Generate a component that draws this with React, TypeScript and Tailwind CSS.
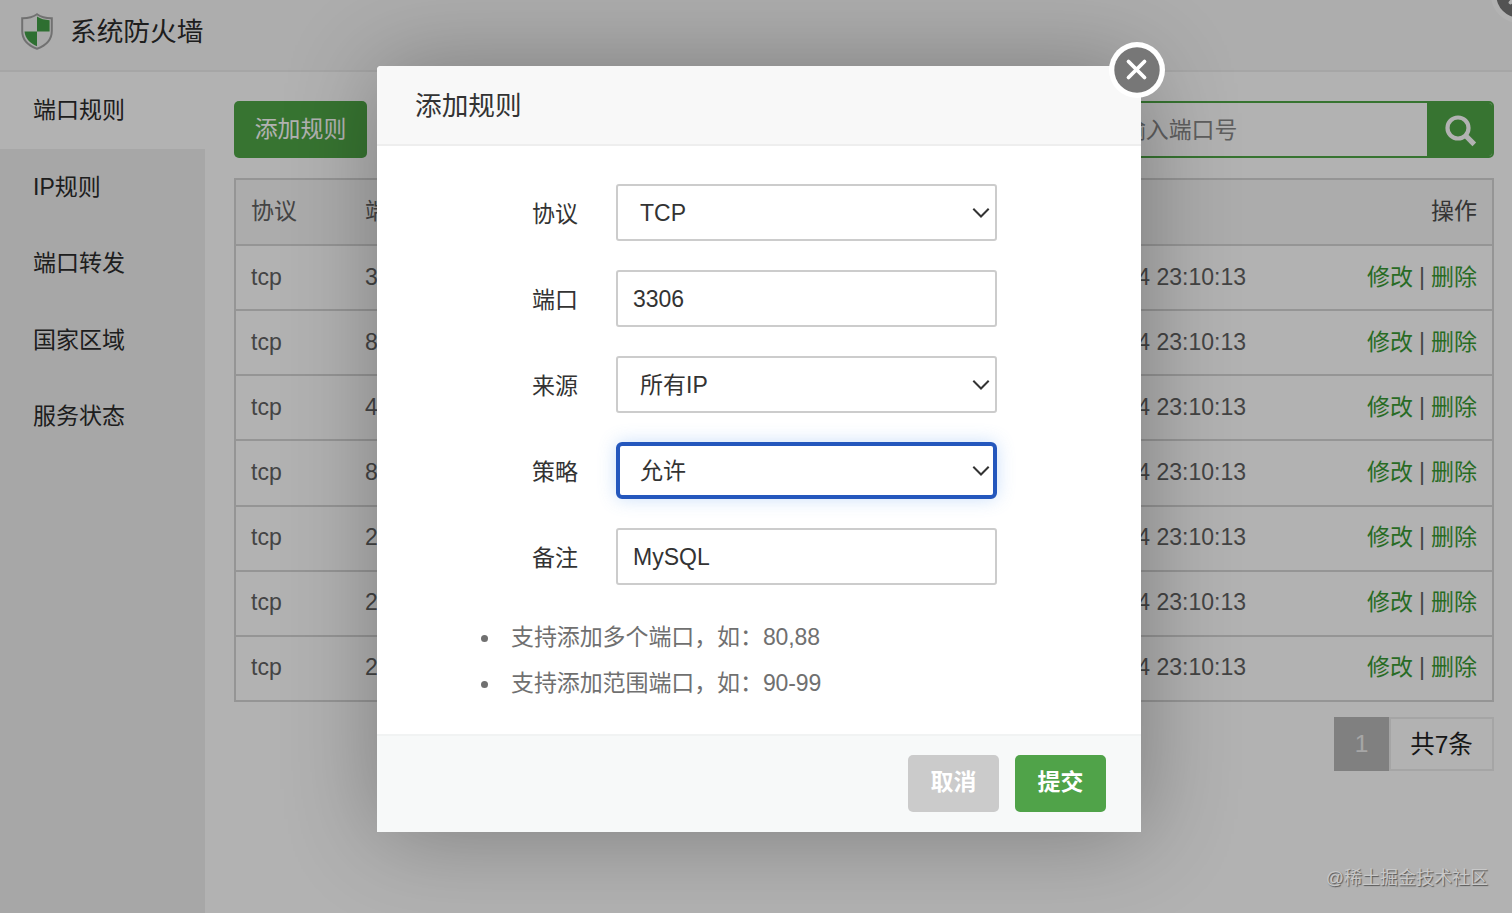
import { clsx } from 'clsx';

const menuItems = ['端口规则', 'IP规则', '端口转发', '国家区域', '服务状态'];

const rules = [
  { protocol: 'tcp', port: '3', time: '4 23:10:13' },
  { protocol: 'tcp', port: '8', time: '4 23:10:13' },
  { protocol: 'tcp', port: '4', time: '4 23:10:13' },
  { protocol: 'tcp', port: '8', time: '4 23:10:13' },
  { protocol: 'tcp', port: '2', time: '4 23:10:13' },
  { protocol: 'tcp', port: '2', time: '4 23:10:13' },
  { protocol: 'tcp', port: '2', time: '4 23:10:13' },
];

const fields = [
  { label: '协议', value: 'TCP', select: true, focused: false },
  { label: '端口', value: '3306', select: false, focused: false },
  { label: '来源', value: '所有IP', select: true, focused: false },
  { label: '策略', value: '允许', select: true, focused: true },
  { label: '备注', value: 'MySQL', select: false, focused: false },
];

const tips = ['支持添加多个端口，如：80,88', '支持添加范围端口，如：90-99'];

function ShieldIcon() {
  return (
    <svg className="w-8 h-[37px]" viewBox="0 0 32 37" fill="none">
      <path d="M16 1.2C12 4 7 5.3 1.2 5.2V18c0 8.4 5.6 14.4 14.8 17.8C25.2 32.4 30.8 26.4 30.8 18V5.2C25 5.3 20 4 16 1.2Z" fill="#f4f4f4" stroke="#a3a3a3" strokeWidth="2" />
      <path d="M16 3.6c3.6 2.3 7.8 3.5 12.6 3.7V18.5H16Z" fill="#43a047" />
      <path d="M16 18.5V33.2C8.5 30.2 4.2 25.2 3.5 18.5Z" fill="#43a047" />
    </svg>
  );
}

function CloseIcon() {
  return (
    <svg className="w-14 h-14" viewBox="0 0 56 56" fill="none">
      <circle cx="28" cy="28" r="28" fill="#fff" />
      <circle cx="28" cy="28" r="22.7" fill="#777" />
      <path d="M19.5 19.5l16 16M35.5 19.5l-16 16" stroke="#fff" strokeWidth="3.8" strokeLinecap="round" />
    </svg>
  );
}

function SearchIcon() {
  return (
    <svg className="w-8 h-8 mt-[3px] ml-[2px]" viewBox="0 0 32 32" fill="none" stroke="#fff">
      <circle cx="13" cy="13" r="10.5" strokeWidth="4.2" />
      <path d="M20.5 20.5l8.8 8.8" strokeWidth="5.2" />
    </svg>
  );
}

function RuleTable() {
  return (
    <div className="mt-5 h-[524px] border-2 border-[#d6d6d6] flex flex-col text-[23px] text-[#626262]">
      <div className="h-[64px] shrink-0 flex items-center px-[15px] pb-[2px] bg-[#f6f6f6]">
        <span className="w-[114px] leading-8">协议</span>
        <span className="flex-1 leading-8">端口</span>
        <span className="leading-8 text-[#4c4c4c]">操作</span>
      </div>
      {rules.map((rule, index) => (
        <div key={index} className="flex-1 flex items-center px-[15px] pb-[2px] border-t-2 border-[#d6d6d6]">
          <span className="w-[114px] leading-8">{rule.protocol}</span>
          <span className="flex-1 leading-8">{rule.port}</span>
          <span className="w-[109px] mr-[121px] leading-8 text-right whitespace-nowrap">{rule.time}</span>
          <span className="w-[110px] flex justify-between leading-8 whitespace-nowrap">
            <a className="text-[#3a9a34]">修改</a>
            <span>|</span>
            <a className="text-[#3a9a34]">删除</a>
          </span>
        </div>
      ))}
    </div>
  );
}

function FirewallPage() {
  return (
    <div className="w-full h-full flex flex-col bg-white">
      <header className="h-[72px] shrink-0 flex items-center gap-[17px] pl-[21px] pb-2 bg-[#f8f8f8] border-b-2 border-[#eee]">
        <ShieldIcon />
        <h1 className="pt-[2px] text-[26.7px] leading-9 text-[#2b2b2b]">系统防火墙</h1>
      </header>

      <div className="flex-1 min-h-0 flex">
        <nav className="w-[205px] shrink-0 bg-[#f0f0f0] text-[23px] text-[#2b2b2b]">
          {menuItems.map((item, index) => (
            <div
              key={item}
              className={clsx('h-[76.5px] pl-[33px] pt-[22px] leading-8', index === 0 && 'bg-white')}
            >
              {item}
            </div>
          ))}
        </nav>

        <main className="flex-1 pl-[29px] pr-[18px] pt-[29px]">
          <div className="h-[57px] flex justify-between">
            <button className="w-[133px] h-full rounded-[5px] bg-[#50a747] text-[22.9px] text-white">添加规则</button>
            <div className="w-[430px] flex rounded-[5px] overflow-hidden border-2 border-[#50a747]">
              <div className="flex-1 pl-[34px] pt-[11px] leading-8 text-[22.9px] text-[#888]">请输入端口号</div>
              <div className="w-[65px] flex items-center justify-center bg-[#50a747]">
                <SearchIcon />
              </div>
            </div>
          </div>

          <RuleTable />

          <div className="mt-[15px] h-[54px] flex justify-end text-[24.5px]">
            <span className="w-[55px] flex items-center justify-center bg-[#b8b8b8] text-[#eee]">1</span>
            <span className="w-[105px] pt-[2px] flex items-center justify-center border-2 border-[#ececec] text-[#222]">共7条</span>
          </div>
        </main>
      </div>
    </div>
  );
}

function AddRuleDialog() {
  return (
    <div className="relative w-[764px] h-[766px] flex flex-col rounded-t-[4px] bg-white shadow-[2px_2px_95px_rgba(0,0,0,0.3)]">
      <div className="h-20 shrink-0 pl-[38px] pt-[22px] rounded-t-[4px] bg-[#f8f8f8] border-b-2 border-[#eee] text-[26.7px] leading-9 text-[#333]">
        添加规则
      </div>
      <button className="absolute -top-[24px] right-[-24px]">
        <CloseIcon />
      </button>

      <div className="flex-1 flex flex-col gap-[29px] pt-[38px]">
        {fields.map((field) => (
          <div key={field.label} className="h-[57px] shrink-0 flex text-[23px]">
            <label className="w-[201px] mr-[38px] pt-[14px] leading-8 text-right text-[#333]">{field.label}</label>
            <div
              className={clsx(
                'w-[381px] flex items-center justify-between text-[#333]',
                field.select && !field.focused && 'pl-[22px] pr-[5px] pt-px',
                !field.select && 'pl-[15px]',
                field.focused
                  ? 'rounded-[6px] border-4 border-[#2457bd] pl-[20px] pr-[3px] pt-px shadow-[0_0_18px_rgba(80,150,240,0.3)]'
                  : 'rounded-[3px] border-2 border-[#ccc]',
              )}
            >
              <span className="leading-8">{field.value}</span>
              {field.select && (
                <svg className="w-[18px] h-3" viewBox="0 0 18 12" fill="none">
                  <path d="M1.3 1.8L9 9.5L16.7 1.8" stroke="#333" strokeWidth="2" />
                </svg>
              )}
            </div>
          </div>
        ))}
        <ul className="pl-[104px] text-[23px] tracking-[-0.1px] leading-[46px] text-[#707070]">
          {tips.map((tip) => (
            <li key={tip} className="flex items-center">
              <span className="w-[7px] h-[7px] mr-[23px] mt-[3px] rounded-full bg-[#707070]" />
              <span>{tip}</span>
            </li>
          ))}
        </ul>
      </div>

      <div className="h-[98px] shrink-0 flex justify-end gap-4 pr-[35px] pt-[19px] bg-[#f7f9f9] border-t-2 border-[#f1f3f3]">
        <button className="w-[91px] h-[57px] pb-[2px] rounded-[5px] bg-[#cbcbcb] text-[22.9px] font-bold text-white">取消</button>
        <button className="w-[91px] h-[57px] pb-[2px] rounded-[5px] bg-[#50a349] text-[22.9px] font-bold text-white">提交</button>
      </div>
    </div>
  );
}

export default function App() {
  return (
    <div className="relative w-[1512px] h-[913px] overflow-hidden font-['Liberation_Sans','Noto_Sans_CJK_SC',sans-serif]">
      <FirewallPage />

      {/* close button of the outer window */}
      <div className="absolute -top-[33px] left-[1491px]">
        <CloseIcon />
      </div>

      <div className="absolute inset-0 bg-black/30" />
      <div className="absolute inset-0 pl-[377px] pt-[66px]">
        <AddRuleDialog />
      </div>

      <span className="absolute right-[24px] bottom-[20px] text-[18px] leading-[30px] text-[#c8c8c8] [text-shadow:1px_1px_1px_#555]">
        @稀土掘金技术社区
      </span>
    </div>
  );
}
